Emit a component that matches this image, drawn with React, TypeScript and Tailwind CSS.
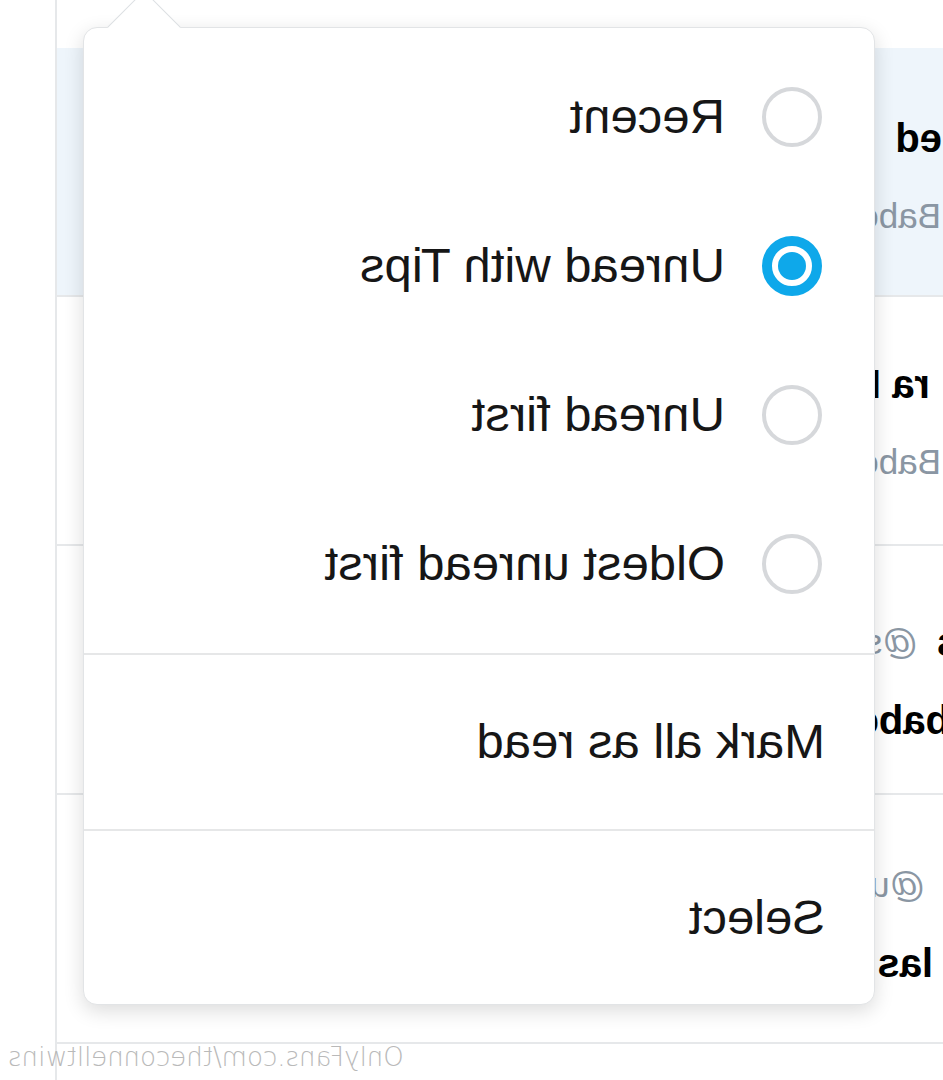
import React from 'react';

type SortOption = { label: string; selected?: boolean };

const sortOptions: SortOption[] = [
  { label: 'Recent' },
  { label: 'Unread with Tips', selected: true },
  { label: 'Unread first' },
  { label: 'Oldest unread first' },
];

const Radio: React.FC<{ checked?: boolean }> = ({ checked }) =>
  checked ? (
    <span className="flex h-[60px] w-[60px] shrink-0 items-center justify-center rounded-full border-[10px] border-[#0ea8ea]">
      <span className="h-[28px] w-[28px] rounded-full bg-[#0ea8ea]" />
    </span>
  ) : (
    <span className="h-[60px] w-[60px] shrink-0 rounded-full border-[4px] border-[#d6d8db]" />
  );

const Line: React.FC<{ second?: boolean; children: React.ReactNode }> = ({ second, children }) => (
  <div className={`flex h-[48px] items-center whitespace-nowrap ${second ? 'mt-[30px]' : ''}`}>{children}</div>
);

const bold = 'text-[40px] font-bold text-black';
const muted = 'text-[35px] text-[#8a96a3]';

const App: React.FC = () => {
  return (
    <div className="relative h-[1080px] w-[943px] overflow-hidden bg-white font-['Liberation_Sans',Arial,sans-serif] -scale-x-100">
      {/* Chat list behind the menu */}
      <div className="h-full w-[888px] border-r-2 border-[#e6e8ea]">
        <div className="h-[48px]" />

        <div className="h-[249px] overflow-hidden border-b-2 border-[#e6e8ea] bg-[#eef5fb] pt-[66px]">
          <Line>
            <span className={`ml-[1px] ${bold}`}>ed</span>
          </Line>
          <Line second>
            <span className={`ml-[2px] ${muted}`}>Babe, thank you so much</span>
          </Line>
        </div>

        <div className="h-[249px] overflow-hidden border-b-2 border-[#e6e8ea] pt-[63px]">
          <Line>
            <span className={`ml-[13px] ${bold}`}>ra Marie</span>
          </Line>
          <Line second>
            <span className={`ml-[2px] ${muted}`}>Babe, are you there?</span>
          </Line>
        </div>

        <div className="h-[249px] overflow-hidden border-b-2 border-[#e6e8ea] pt-[72px]">
          <Line>
            <span className={`-ml-[16px] ${bold}`}>s</span>
            <span className={`ml-[19px] ${muted}`}>@sweetie</span>
          </Line>
          <Line second>
            <span className={`-ml-[7px] ${bold}`}>babe</span>
          </Line>
        </div>

        <div className="h-[249px] overflow-hidden border-b-2 border-[#e6e8ea] pt-[66px]">
          <Line>
            <span className={`ml-[18px] ${muted}`}>@u1234567</span>
          </Line>
          <Line second>
            <span className={`ml-[10px] ${bold}`}>las</span>
          </Line>
        </div>
      </div>

      {/* Sort menu */}
      <div className="absolute left-[68px] top-[27px] w-[792px] rounded-[14px] border border-[#e2e4e6] bg-white shadow-[0_6px_20px_rgba(0,0,0,0.14)]">
        <span className="absolute left-[704px] top-[-27px] h-[52px] w-[52px] rotate-45 border-l border-t border-[#dcdfe2] bg-white" />
        <div className="relative pb-[15px] pt-[14px]">
          {sortOptions.map((option) => (
            <div key={option.label} className="flex h-[149px] items-center gap-[37px] px-[52px]">
              <Radio checked={option.selected} />
              <span className="text-[49px] text-[#161616]">{option.label}</span>
            </div>
          ))}
        </div>
        <div className="h-[2px] bg-[#e6e7e8]" />
        <div className="flex h-[174px] items-center px-[49px] text-[49px] text-[#161616]">Mark all as read</div>
        <div className="h-[2px] bg-[#e6e7e8]" />
        <div className="flex h-[173px] items-center px-[49px] text-[49px] text-[#161616]">Select</div>
      </div>

      {/* Watermark */}
      <div className="absolute right-[8px] top-[1038px] font-['DejaVu_Sans',sans-serif] text-[26px] font-light text-[#b9b9b9]">
        OnlyFans.com/theconnelltwins
      </div>
    </div>
  );
};

export default App;
